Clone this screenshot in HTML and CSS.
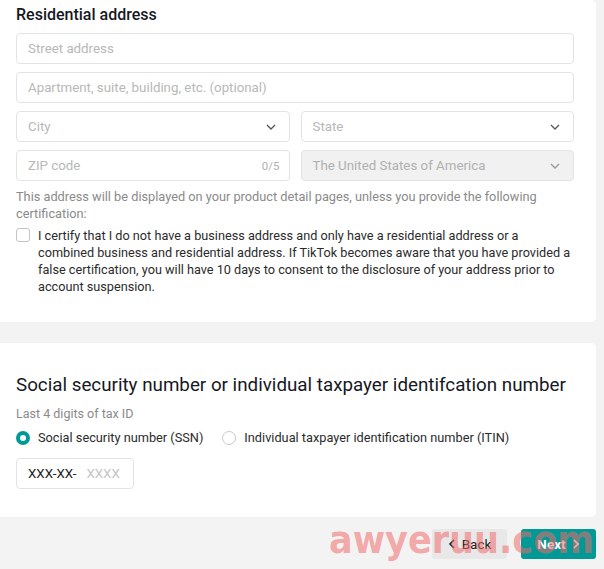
FILE: index.html
```html
<!DOCTYPE html>
<html lang="en">
<head>
<meta charset="utf-8" />
<title>Business information</title>
<link rel="stylesheet" href="styles.css">
</head>
<body>
<div class="page">
	<section class="card card-address">
		<h3 class="card-title">Residential address</h3>
		<div class="fields">
			<div class="field wide"><span class="ph">Street address</span></div>
			<div class="field wide"><span class="ph">Apartment, suite, building, etc. (optional)</span></div>
			<div class="field"><span class="ph">City</span><svg class="chev" width="10" height="6" viewBox="0 0 10 6"><path d="M1 1l4 4 4-4" fill="none" stroke="#555" stroke-width="1.3"/></svg></div>
			<div class="field"><span class="ph">State</span><svg class="chev" width="10" height="6" viewBox="0 0 10 6"><path d="M1 1l4 4 4-4" fill="none" stroke="#555" stroke-width="1.3"/></svg></div>
			<div class="field"><span class="ph">ZIP code</span><span class="count">0/5</span></div>
			<div class="field disabled"><span class="ph">The United States of America</span><svg class="chev" width="10" height="6" viewBox="0 0 10 6"><path d="M1 1l4 4 4-4" fill="none" stroke="#999" stroke-width="1.3"/></svg></div>
		</div>
		<p class="hint">This address will be displayed on your product detail pages, unless you provide the following certification:</p>
		<label class="certify">
			<span class="checkbox"></span>
			<span>I certify that I do not have a business address and only have a residential address or a combined business and residential address. If TikTok becomes aware that you have provided a false certification, you will have 10 days to consent to the disclosure of your address prior to account suspension.</span>
		</label>
	</section>

	<section class="card card-tax">
		<h3 class="tax-title">Social security number or individual taxpayer identifcation number</h3>
		<div class="tax-label">Last 4 digits of tax ID</div>
		<div class="radios">
			<label class="radio"><span class="dot on"></span>Social security number (SSN)</label>
			<label class="radio"><span class="dot"></span>Individual taxpayer identification number (ITIN)</label>
		</div>
		<div class="ssn"><span class="prefix">XXX-XX-</span><span class="ph">XXXX</span></div>
	</section>

	<div class="footer">
		<button class="btn back"><svg width="8" height="10" viewBox="0 0 8 10"><path d="M6 1L2 5l4 4" fill="none" stroke="#222" stroke-width="1.6"/></svg>Back</button>
		<button class="btn next">Next<svg width="8" height="10" viewBox="0 0 8 10"><path d="M2 1l4 4-4 4" fill="none" stroke="#fff" stroke-width="1.6"/></svg></button>
		<div class="watermark">awyeruu.com</div>
	</div>
</div>
</body>
</html>
```

FILE: styles.css
```css
*{box-sizing:border-box;}
html, body{margin:0; padding:0; height:100%; overflow:hidden;}
body{background:#f3f3f3; font-family:Roboto, "Liberation Sans", Arial, sans-serif; color:#222; font-size:13px;}
.page{width:596px; display:flex; flex-direction:column;}
.card{background:#fff; border-radius:0 5px 5px 0; padding:0 22px 0 16px;}
.card-address{padding-top:4px; padding-bottom:27px;}
.card-title{margin:0 0 7px; font-size:16px; line-height:22px; font-weight:500; color:#161823;}
.fields{display:grid; grid-template-columns:1fr 1fr; column-gap:11px; row-gap:8px;}
.field{height:31px; border:1px solid #e3e3e3; border-radius:4px; display:flex; align-items:center; padding:0 11px; background:#fff;}
.field.wide{grid-column:1 / span 2;}
.field.disabled{background:#f1f1f1;}
.field .ph{flex:1; color:#b8b8b8; font-size:13.3px;}
.field.disabled .ph{color:#b0b0b0;}
.chev{margin-right:2px;}
.count{color:#b0b0b0; font-size:11.5px; margin-right:-2px;}
.hint{margin:7px 0 0; color:#8a8a8a; font-size:12.75px; line-height:17px;}
.certify{display:flex; gap:8px; margin-top:5px; font-size:12.7px; line-height:17px; color:#2b2b2b;}
.checkbox{flex:none; width:14px; height:14px; border:1px solid #c4c4c4; border-radius:3px; margin-top:1px;}
.card-tax{margin-top:21px; padding-top:30px; padding-bottom:28px;}
.tax-title{margin:0; font-size:18.8px; line-height:24px; font-weight:400; color:#161823;}
.tax-label{margin-top:8px; color:#8a8a8a; font-size:12.5px; line-height:17px;}
.radios{display:flex; gap:19px; margin-top:7px; line-height:18px;}
.radio{display:flex; align-items:center; gap:8px; font-size:12.75px; color:#2b2b2b;}
.dot{width:14px; height:14px; border-radius:50%; border:1px solid #c8c8c8; background:#fff;}
.dot.on{border:4px solid #009995;}
.ssn{margin-top:11px; width:118px; height:31px; border:1px solid #e3e3e3; border-radius:4px; display:flex; align-items:center; padding:0 11px; gap:10px; font-size:13.3px;}
.ssn .prefix{color:#222;}
.ssn .ph{color:#c4c4c4;}
.footer{position:relative; display:flex; justify-content:flex-end; gap:14px; padding:12px 0 10px;}
.btn{width:75px; height:30px; border:none; border-radius:3px; font-family:inherit; font-size:13.5px; display:flex; align-items:center; justify-content:center; gap:6px;}
.back{background:#e8e8e8; color:#222;}
.next{background:#009995; color:#fff; font-weight:700;}
.watermark{position:absolute; left:329px; top:-5px; font-family:"DejaVu Sans Condensed", "DejaVu Sans", sans-serif; font-weight:700; font-size:39px; line-height:56px; color:rgba(242,105,105,0.55); pointer-events:none; white-space:nowrap;}
```
